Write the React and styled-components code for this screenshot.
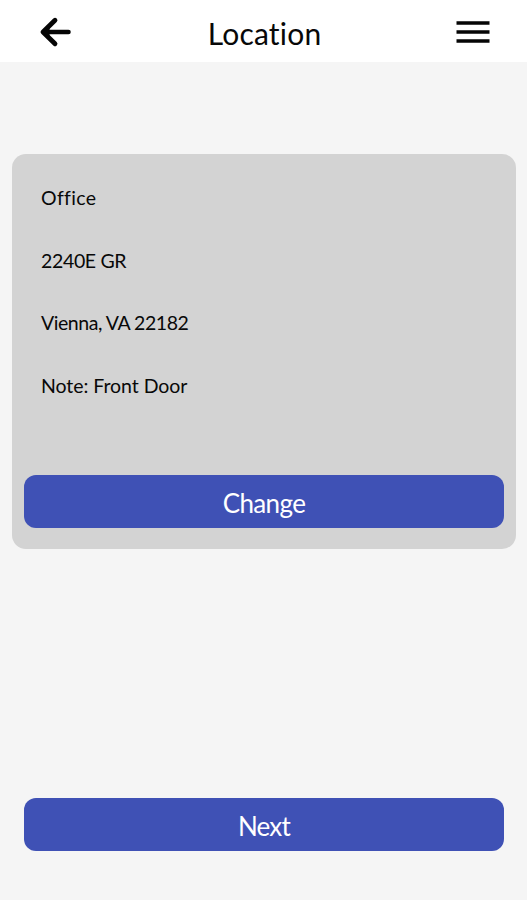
import React from 'react';
import styled, { createGlobalStyle } from 'styled-components';

const GlobalStyle = createGlobalStyle`
  *, *::before, *::after { box-sizing: border-box; }
  body { margin: 0; background: #f5f5f5; }
`;

const Screen = styled.div`
  display: flex;
  flex-direction: column;
  height: 900px;
  background: #f5f5f5;
  color: #080808;
  font-family: Lato, "Open Sans", sans-serif;
`;

const Header = styled.header`
  display: grid;
  grid-template-columns: 36px 1fr 36px;
  align-items: center;
  flex: none;
  height: 62px;
  padding: 0 36px 0 38px;
  background: #fff;
`;

const Title = styled.h1`
  margin: 0;
  padding-top: 3px;
  font-size: 30px;
  font-weight: 400;
  line-height: 36px;
  text-align: center;
  letter-spacing: 0.2px;
`;

const IconButton = styled.button`
  display: flex;
  width: 36px;
  height: 36px;
  margin-top: 2px;
  padding: 0;
  border: 0;
  background: none;
  color: #050505;
`;

const Card = styled.section`
  display: flex;
  flex-direction: column;
  flex: none;
  height: 395px;
  margin: 92px 11px 0 12px;
  padding: 13px 12px 21px;
  border-radius: 14px;
  background: #d3d3d3;
`;

const Address = styled.div`
  flex: 1;
  padding-left: 17px;
`;

const Line = styled.p`
  margin: 0;
  font-size: 19.5px;
  line-height: 62.5px;
  white-space: nowrap;
  letter-spacing: ${(p) => p.$spacing || 0}px;
`;

const Button = styled.button`
  flex: none;
  width: 100%;
  height: 53px;
  padding: 2px 0 0;
  border: 0;
  border-radius: 12px;
  background: #3f51b5;
  color: #fff;
  font: 400 26px/32px Lato, "Open Sans", sans-serif;
  letter-spacing: ${(p) => p.$spacing || 0}px;
`;

const Footer = styled.footer`
  margin-top: auto;
  padding: 0 23px 49px 24px;
`;

const BackIcon = () => (
  <svg width="36" height="36" viewBox="0 0 36 36" fill="none" stroke="currentColor" strokeLinecap="round" strokeLinejoin="round">
    <path d="M17 6.2 5 18l12 11.8" strokeWidth="4.8" />
    <path d="M7 18h23.5" strokeWidth="4.6" />
    <path d="m5 18 6-5.5v11Z" fill="currentColor" strokeWidth="1" />
  </svg>
);

const MenuIcon = () => (
  <svg width="36" height="36" viewBox="0 0 36 36" fill="none" stroke="currentColor" strokeWidth="3.4">
    <path d="M1.5 9h33M1.5 18h33M1.5 27h33" />
  </svg>
);

const lines = [
  { text: 'Office', spacing: 0.35 },
  { text: '2240E GR', spacing: -0.35 },
  { text: 'Vienna, VA 22182', spacing: -0.45 },
  { text: 'Note: Front Door', spacing: -0.05 },
];

export default function App() {
  return (
    <Screen>
      <GlobalStyle />
      <Header>
        <IconButton aria-label="Back"><BackIcon /></IconButton>
        <Title>Location</Title>
        <IconButton aria-label="Menu"><MenuIcon /></IconButton>
      </Header>
      <Card>
        <Address>
          {lines.map((l) => <Line key={l.text} $spacing={l.spacing}>{l.text}</Line>)}
        </Address>
        <Button $spacing={-0.6}>Change</Button>
      </Card>
      <Footer><Button $spacing={-0.8}>Next</Button></Footer>
    </Screen>
  );
}
